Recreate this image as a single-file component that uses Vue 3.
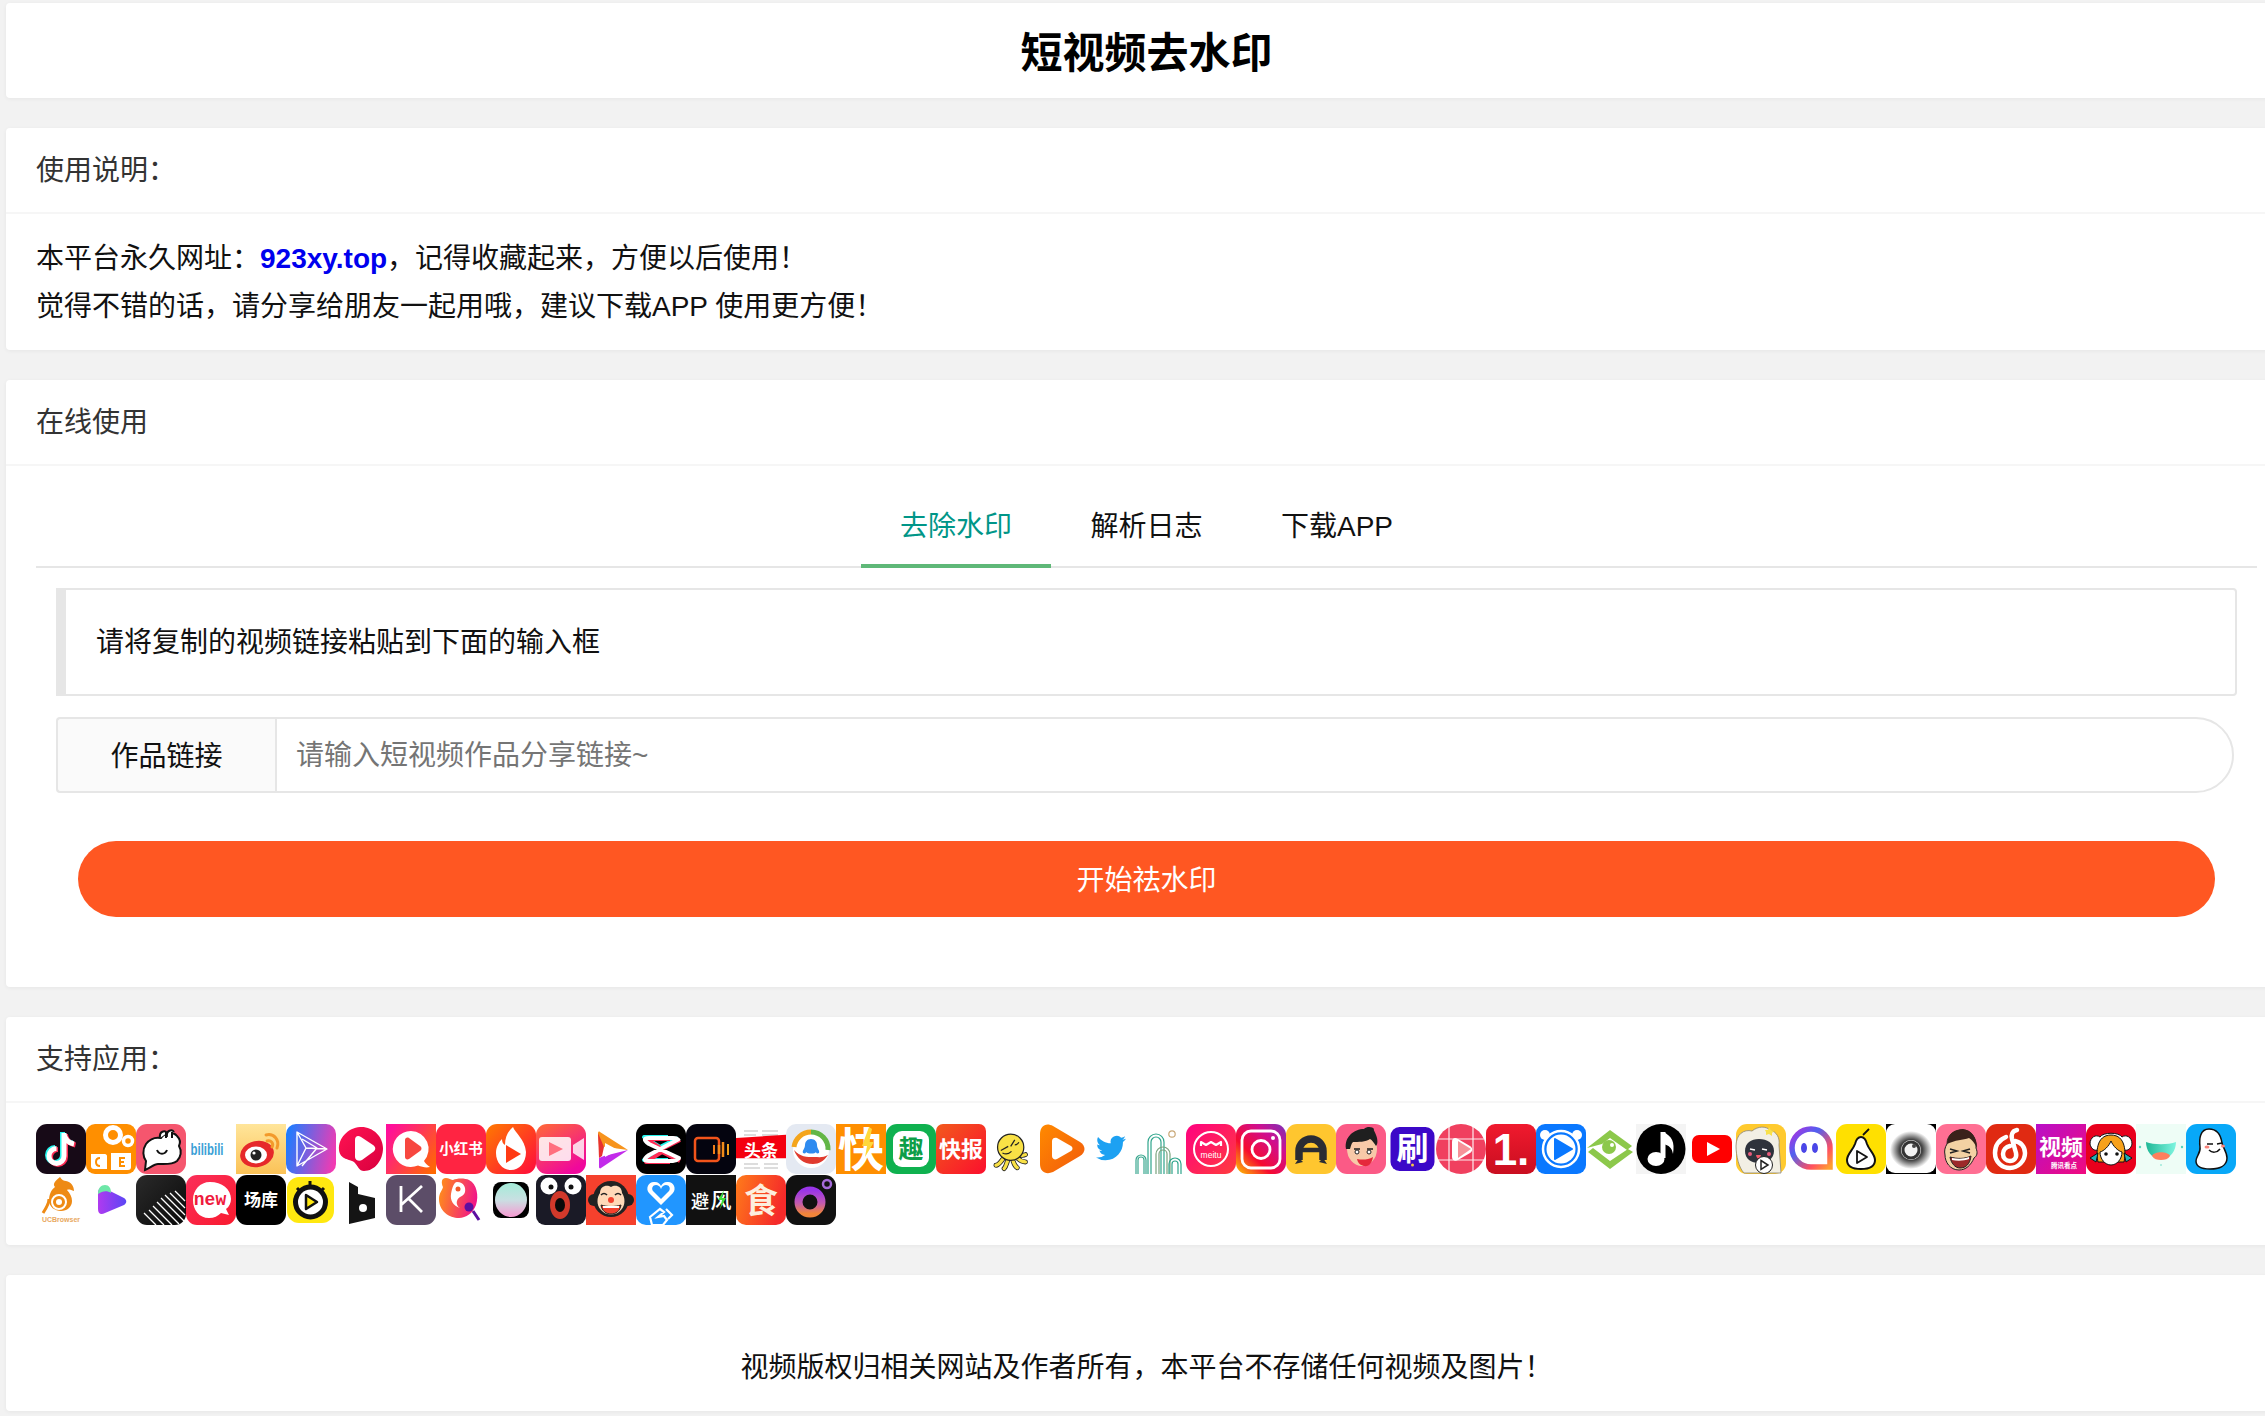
<script setup>
const tabs = [
  { label: '去除水印', active: true },
  { label: '解析日志', active: false },
  { label: '下载APP', active: false },
]

const bg = (fill, rx = 11) => `<rect width="50" height="50" rx="${rx}" fill="${fill}"/>`
const grad = (id, a, b, dir = 'x1="0" y1="0" x2="1" y2="1"') =>
  `<defs><linearGradient id="${id}" ${dir}><stop offset="0" stop-color="${a}"/><stop offset="1" stop-color="${b}"/></linearGradient></defs>`
const txt = (s, x, y, size, fill = '#fff', extra = 'font-weight="700"') =>
  `<text x="${x}" y="${y}" font-size="${size}" fill="${fill}" text-anchor="middle" ${extra}>${s}</text>`

const note = 'M28 9v23a7.5 7.5 0 1 1-7.5-7.5M28 10c1 6 5 9 10 10'
const tentacles = 'M14 36c-3 4-5 7-8 7M20 38c-1 3-2 7-4 9M27 38c1 3 2 6 5 8M32 34c3 3 6 5 10 5M34 30c3 1 6 1 8 0'

const icons = [
  // 1 TikTok
  bg('#170a17') +
    `<g fill="none" stroke-width="5"><path d="${note}" stroke="#25f4ee" transform="translate(-1.5 -1)"/><path d="${note}" stroke="#fe2c55" transform="translate(1.5 1)"/><path d="${note}" stroke="#fff"/></g>`,
  // 2 Kuaishou
  bg('#ff8f00', 9) +
    `<circle cx="27" cy="11" r="7.5" fill="none" stroke="#fff" stroke-width="5"/><circle cx="42" cy="17" r="4.5" fill="none" stroke="#fff" stroke-width="3.5"/><path d="M5 30h14c1 0 2 1 2 2v13H8c-2 0-3-1-3-3z" fill="#fff"/><path d="M25 29h20v14c0 2-1 3-3 3H25z" fill="#fff"/><path d="M14 34c-3 0-4 2-4 4s1 4 4 4M39 34h-5v8h5M34 38h4" fill="none" stroke="#ff8f00" stroke-width="2"/>`,
  // 3 Pink bubble
  bg('#f5566e') +
    `<path d="M9 46l1-9c-3-4-4-11 0-17 4-5 10-7 15-6 3-5 12-7 16-2 4 4 3 8 2 10 3 5 2 11-2 15-5 4-12 3-19 3-4 0-8 4-13 6z" fill="#fff" stroke="#111" stroke-width="2"/><path d="M24 14c-1-7 5-8 7-5M31 13c-1-7 5-8 7-5" fill="#fff" stroke="#111" stroke-width="2"/><path d="M30 8v6M36 8v6" stroke="#111" stroke-width="2"/><path d="M21 26c2 5 8 5 10 0" fill="none" stroke="#111" stroke-width="2"/>`,
  // 4 bilibili
  txt('bilibili', 21, 31, 16, '#3a9fd6', 'font-weight="700" textLength="33" lengthAdjust="spacingAndGlyphs"'),
  // 5 Weibo
  grad('g5', '#ffe59a', '#fbc257', 'x1="0" y1="0" x2="0" y2="1"') +
    `<rect width="50" height="50" fill="url(#g5)"/><ellipse cx="21" cy="30" rx="17" ry="13" fill="#e6282a" transform="rotate(-12 21 30)"/><ellipse cx="20" cy="31" rx="11" ry="8.5" fill="#fff"/><circle cx="20" cy="31" r="5.5" fill="#222"/><circle cx="18" cy="29" r="1.6" fill="#fff"/><path d="M30 11c8-2 14 5 11 13M31 17c4-1 7 2 5 6" fill="none" stroke="#f39a2b" stroke-width="3" stroke-linecap="round"/>`,
  // 6 Wireframe play
  grad('g6', '#1f7cff', '#f23ab2', 'x1="0" y1="0.4" x2="1" y2="0.6"') +
    bg('url(#g6)', 10) +
    `<path d="M11 8l30 17-30 17zM11 8l9 16-9 18M20 24l21 1M16 15l15 9-15 18" fill="none" stroke="#fff" stroke-width="1.4" stroke-linejoin="round"/>`,
  // 7 Red blob
  grad('g7', '#ff1252', '#d9003e') +
    `<path d="M24 3c12-1 23 9 23 21 0 12-8 23-19 23-5 0-6-5-10-9-4-3-14-2-15-12C2 14 12 4 24 3z" fill="url(#g7)"/><path d="M18 16c0-4 3-5 6-3l12 8c3 2 3 5 0 7l-11 8c-3 2-7 0-7-3z" fill="#fff" transform="translate(1 0)"/>`,
  // 8 Q play
  grad('g8', '#ff0f9b', '#ff6a00', 'x1="0" y1="0.2" x2="1" y2="0.9"') +
    `<rect width="50" height="50" fill="url(#g8)"/><path d="M25 7a18 18 0 1 0 7 34.500c4 1.500 8 2.500 12 1.500-3-2-5-4-6-6A18 18 0 0 0 25 7z" fill="#fff"/><path d="M19 16c0-2 2-3 4-2l11 8c2 1 2 4 0 5l-11 8c-2 1-4 0-4-2z" fill="#f7473f"/>`,
  // 9 Xiaohongshu
  bg('#ff2442') + txt('小红书', 25, 30, 14.5),
  // 10 Flame
  grad('g10', '#ff7a00', '#ff0a3c') +
    bg('url(#g10)') +
    `<path d="M27 3c2 6 12 12 13 25 0 11-7 18-15 18S10 39 10 29c0-6 3-11 6-14 0 3 1 5 3 6 0-8 3-14 8-18z" fill="#fff"/><path d="M20 21l15 9-15 9z" fill="#ff3a14"/>`,
  // 11 Camera gradient
  grad('g11', '#ff6b35', '#f0089c', 'x1="0" y1="0" x2="0.6" y2="1"') +
    bg('url(#g11)') +
    `<path d="M6 13h26c2 0 3 1 3 3v18c0 2-1 3-3 3H6c-2 0-3-1-3-3V16c0-2 1-3 3-3z" fill="#fff" opacity=".85"/><path d="M13 18l14 7-14 7z" fill="#ff6f7f"/><path d="M37 21l11-7v22l-11-7z" fill="#fff" opacity=".8"/>`,
  // 12 Play colour triangle
  `<path d="M14 8c-1-1-2 0-2 1l1 13 7 1 22 3z" fill="#f7941d"/><path d="M12 9l6 14-2 9-3 2z" fill="#e8322e"/><path d="M13 43c0 1 1 2 2 1l27-18-24 6-5 2z" fill="#c22bea"/><path d="M19 19l13 7-13 7z" fill="#fff"/>`,
  // 13 CapCut
  bg('#000') +
    `<g fill="none" stroke-width="4" stroke-linejoin="round"><path d="M43 15L25 24 9 14H33M43 36L25 27 9 37h24" stroke="#25f4ee" transform="translate(-1 -1)"/><path d="M43 15L25 24 9 14H33M43 36L25 27 9 37h24" stroke="#fe2c55" transform="translate(1 1)"/><path d="M43 15L13 31c-6 4-5 6 0 6h24c3 0 5-2 6-3L13 20c-6-4-5-6 0-6h24c3 0 5 1 6 3" stroke="#fff"/></g>`,
  // 14 Black video
  bg('#04040f') +
    `<rect x="9" y="14" width="24" height="23" rx="3" fill="none" stroke="#f2541b" stroke-width="2.500"/><path d="M28 21v9" stroke="#f07d1a" stroke-width="2"/><path d="M33 21v9M37 18v15" stroke="#f28b1a" stroke-width="2.500"/><path d="M42 20v11" stroke="#f2a01a" stroke-width="2"/>`,
  // 15 Toutiao
  `<rect width="50" height="50" fill="#fff"/><path d="M8 7h14M26 7h16M8 11h12M26 11h16M8 44h16M28 44h14M8 40h14M28 40h14" stroke="#ddd" stroke-width="2"/><path d="M0 14l50-4v30l-50 0z" fill="#f4000f" transform="translate(0 3) scale(1 .78)"/>` +
    txt('头条', 25, 33, 17),
  // 16 Tencent news
  bg('#e4e9f2', 10) +
    `<circle cx="25" cy="26" r="18" fill="#fff"/><path d="M8 23A17 17 0 0 1 25 8" fill="none" stroke="#f4a51c" stroke-width="5"/><path d="M25 8A17 17 0 0 1 42 26" fill="none" stroke="#63b646" stroke-width="5"/><path d="M8 26c3 8 9 14 19 14 6 0 11-3 15-9-5 3-9 2-14 2-7 0-14 0-20-7z" fill="#e03b2f"/><path d="M25 15c4 0 6 3 6 6 0 4 3 5 2 8-2 1-3 0-3-1-1 2-8 2-10 0 0 1-1 2-3 1-1-3 2-4 2-8 0-3 2-6 6-6z" fill="#2e8bf0"/>`,
  // 17 Kuai
  `<rect width="50" height="50" fill="#ff8f00"/>` + txt('快', 25, 42, 46) + `<path d="M33 3L26 22h5l-2 11 9-15h-5l3-13z" fill="#ffd83b"/>`,
  // 18 Qu
  bg('#0fb14f') + `<rect x="7" y="7" width="36" height="36" rx="9" fill="#fff"/>` + txt('趣', 25, 34, 25, '#0d9e48'),
  // 19 Kuaibao
  grad('g19', '#f25a1c', '#fb0f2d') + bg('url(#g19)', 7) + txt('快报', 25, 33, 22),
  // 20 Yellow octopus
  `<g transform="translate(5 6) scale(.82)"><path d="${tentacles}" stroke="#222" stroke-width="6" stroke-linecap="round" fill="none"/><path d="${tentacles}" stroke="#f9e146" stroke-width="4" stroke-linecap="round" fill="none"/><circle cx="24" cy="21" r="16" fill="#f9e146" stroke="#222" stroke-width="1.500"/><path d="M12 25l9-5M29 12l-5 8M14 28c4 2 8 1 11-2M29 18c2 0 4-1 5-3" stroke="#222" stroke-width="1.500" fill="none"/></g>`,
  // 21 Orange play
  grad('g21', '#ff8a00', '#f25a0c') +
    `<path d="M4 10c0-8 6-12 13-8l27 16c6 4 6 10 0 14L17 48C10 51 4 48 4 40z" fill="url(#g21)"/><path d="M16 17c0-3 3-4 5-3l14 8c2 1 2 4 0 5l-14 8c-2 1-5 0-5-3z" fill="#fff"/>`,
  // 22 Twitter
  `<g transform="translate(10 9) scale(1.25)"><path fill="#1da1f2" d="M23.950 4.570a10 10 0 0 1-2.820.780 4.960 4.960 0 0 0 2.160-2.720 9.900 9.900 0 0 1-3.120 1.180 4.920 4.920 0 0 0-8.380 4.480C7.690 8.100 4.070 6.130 1.640 3.160a4.820 4.820 0 0 0-.660 2.470c0 1.710.870 3.210 2.190 4.100a4.900 4.900 0 0 1-2.230-.610v.060a4.920 4.920 0 0 0 3.950 4.830 5 5 0 0 1-2.210.080 4.940 4.940 0 0 0 4.600 3.420A9.870 9.870 0 0 1 0 19.540a14 14 0 0 0 7.560 2.210c9.050 0 14-7.500 14-13.980 0-.210 0-.420-.020-.630A9.940 9.940 0 0 0 24 4.590z"/></g>`,
  // 23 Arches
  `<g fill="none" stroke-width="1.200"><path d="M0 50V36a5 5 0 0 1 10 0v14M2 50V36a3 3 0 0 1 6 0v14" stroke="#3aa78f"/><path d="M12 50V18a8 8 0 0 1 16 0v32M15 50V18a5 5 0 0 1 10 0v32" stroke="#2fa58c"/><path d="M20 50V30a7 7 0 0 1 14 0v20M23 50V30a4 4 0 0 1 8 0v20" stroke="#7aa37e"/><path d="M33 50V40a6 6 0 0 1 12 0v10M36 50V40a3 3 0 0 1 6 0v10" stroke="#2fa58c"/></g><circle cx="36" cy="10" r="3.200" fill="#fff" stroke="#c9a877" stroke-width="1.200"/>`,
  // 24 Meitu
  grad('g24', '#ff0080', '#ff3d3d') +
    bg('url(#g24)') +
    `<circle cx="25" cy="25" r="17" fill="none" stroke="#fff" stroke-width="2"/><path d="M15 22v-4l5 3 5-3 5 3 5-3v4" fill="none" stroke="#fff" stroke-width="2.200" stroke-linejoin="round"/>` +
    txt('meitu', 25, 34, 8.500, '#fff', 'font-weight="400"'),
  // 25 Instagram
  `<defs><linearGradient id="g25" x1="0" y1="1" x2="1" y2="0"><stop offset="0" stop-color="#fec800"/><stop offset=".35" stop-color="#f60b30"/><stop offset=".7" stop-color="#d00f8e"/><stop offset="1" stop-color="#7a32b8"/></linearGradient></defs>` +
    bg('url(#g25)') +
    `<rect x="6" y="7" width="38" height="37" rx="9" fill="none" stroke="#fff" stroke-width="2.800"/><circle cx="25" cy="25.500" r="9" fill="none" stroke="#fff" stroke-width="2.800"/><circle cx="37" cy="14" r="2" fill="#fff"/>`,
  // 26 Yellow A
  bg('#ffc62f') +
    `<path d="M13 36V27a12 12 0 0 1 24 0v9" fill="none" stroke="#2a2c33" stroke-width="7.500"/><path d="M9 40l4-6 4 4zM41 40l-4-6-4 4z" fill="#2a2c33"/><path d="M14 26h22" stroke="#2a2c33" stroke-width="4.500"/>`,
  // 27 Boy
  bg('#fb5a86') +
    `<ellipse cx="26" cy="25" rx="15" ry="17" fill="#f7c9a8"/><path d="M10 25c-2-12 8-20 18-20 3-3 9-2 10 0-1 1 2 4 3 9 1 5 0 7-1 8-2-3-4-6-6-7-4 3-12 3-17 3-2 2-2 4-3 7z" fill="#1f1f1f"/><path d="M18 25h6M31 25h6" stroke="#1f1f1f" stroke-width="1.500"/><circle cx="21" cy="28" r="2" fill="#fff" stroke="#222"/><circle cx="33" cy="28" r="2" fill="#fff" stroke="#222"/><path d="M21 35c5 1 11 1 16-2-1 6-4 10-9 9-4-1-6-3-7-7z" fill="#e5283c"/>`,
  // 28 Shua
  `<rect x="4.500" y="3" width="44" height="44" rx="9" fill="#3c08c8"/>` + txt('刷', 26.500, 36, 32) + `<circle cx="26.500" cy="41" r="1.500" fill="#f6c544"/>`,
  // 29 Red grid
  `<circle cx="25" cy="25" r="25" fill="#f0405f"/><path d="M2 15h46M2 36h46M13 2v46M37 2v46" stroke="#fff" stroke-width="1.200" opacity=".9"/><path d="M16 18c0-4 3-5 6-3l12 7c3 2 3 5 0 7l-12 7c-3 2-6 0-6-3z" fill="#fff"/><path d="M22 17l13 8-13 9z" fill="#f04a55" opacity=".6"/>`,
  // 30 One
  grad('g30', '#f01a2e', '#c90e20', 'x1="0" y1="0" x2="0" y2="1"') + bg('url(#g30)', 9) + txt('1.', 25, 41, 44, '#fff', 'font-weight="700" font-family="Liberation Sans"'),
  // 31 Baidu bear
  bg('#0a78ff', 9) +
    `<circle cx="9" cy="11" r="5" fill="#fff"/><circle cx="41" cy="11" r="5" fill="#fff"/><circle cx="25" cy="25" r="18" fill="#0a78ff" stroke="#fff" stroke-width="2.500"/><circle cx="25" cy="25" r="14.500" fill="#fff"/><path d="M19 15l17 10-17 10z" fill="#0a78ff" stroke="#0a78ff" stroke-width="2" stroke-linejoin="round"/>`,
  // 32 Green eye
  `<path d="M1 24L24 6l22 16-5 4-17-12-8 6zM2 28l5-4 17 13 18-12 5 3-23 17z" fill="#8cc84b"/><circle cx="23" cy="23" r="7" fill="#8cc84b"/><circle cx="26" cy="21" r="2" fill="#fff"/>`,
  // 33 Music
  `<rect width="50" height="50" fill="#f4f4f4"/><ellipse cx="25" cy="25" rx="24.500" ry="25" fill="#000"/><path d="M27 8v26" stroke="#fff" stroke-width="5"/><ellipse cx="20" cy="35" rx="8.500" ry="7" fill="#fff"/><path d="M27 8c9 4 12 10 10 22-1-6-4-9-10-10z" fill="#fff"/>`,
  // 34 YouTube
  `<rect x="6" y="11" width="40" height="28" rx="7" fill="#f00"/><path d="M21 18l13 7-13 7z" fill="#fff"/>`,
  // 35 Sheep
  bg('#ffca2e') +
    `<path d="M0 22C0 10 8 5 16 7c6-5 14-5 18-1 7 2 10 8 9 15l2 28H8C3 44 0 32 0 22z" fill="#f2efe4" stroke="#8c8470" stroke-width=".8"/><path d="M9 27c0-8 6-12 14-12s15 4 15 12c0 8-7 12-15 12S9 35 9 27z" fill="#2e323b"/><path d="M14 25l5 1M26 25l5 1" stroke="#fff" stroke-width="1.500"/><path d="M20 31c1 5 4 5 5 0z" fill="#f15a6b"/><circle cx="14" cy="30" r="2" fill="#e85b7b"/><circle cx="33" cy="30" r="2" fill="#e85b7b"/><circle cx="28" cy="41" r="8.500" fill="#fff" stroke="#222" stroke-width="1"/><path d="M25 36.500l7 4.500-7 4.500z" fill="none" stroke="#222" stroke-width="1.500"/><path d="M29 6l3 0 1-3 2 3 3 1-2 2 0 3-3-2-3 1 0-3z" fill="#f8e04a"/>`,
  // 36 Gradient ring
  `<defs><linearGradient id="g36" x1="0" y1="0" x2="1" y2="1"><stop offset="0" stop-color="#b030e0"/><stop offset=".35" stop-color="#5060f0"/><stop offset=".75" stop-color="#ff5060"/><stop offset="1" stop-color="#ffa030"/></linearGradient></defs><path d="M44 43H25A19 19 0 1 1 44 24z" fill="none" stroke="url(#g36)" stroke-width="5.500"/><ellipse cx="18" cy="24" rx="3" ry="5" fill="#4a46e8"/><ellipse cx="29" cy="24" rx="3" ry="5" fill="#4a46e8"/>`,
  // 37 Pear
  bg('#ffe000') +
    `<path d="M25 13c3 0 5 3 6 7 2 6 8 10 8 16 0 5-4 9-14 9s-14-4-14-9c0-6 6-10 8-16 1-4 3-7 6-7z" fill="#fff" stroke="#111" stroke-width="2"/><path d="M27 11l6-6" stroke="#111" stroke-width="1.800"/><path d="M21 27l10 6-10 6z" fill="none" stroke="#111" stroke-width="1.800" stroke-linejoin="round"/>`,
  // 38 Eye
  `<defs><radialGradient id="g38"><stop offset=".55" stop-color="#444"/><stop offset="1" stop-color="#fff"/></radialGradient></defs><rect width="50" height="50" fill="#000"/><rect x="0" y="0" width="50" height="49" rx="9" fill="#fff"/><ellipse cx="25" cy="26" rx="21" ry="19" fill="url(#g38)"/><circle cx="25" cy="26" r="10" fill="#f2f2f2"/><circle cx="25" cy="26" r="8" fill="none" stroke="#333" stroke-width="3"/><circle cx="28" cy="22" r="2" fill="#444"/>`,
  // 39 Laugh face
  bg('#ff6f93') +
    `<path d="M11 20c0-10 8-14 16-14s14 8 13 18c2 5 1 8-2 10-3 7-8 12-15 12-9 0-14-8-14-15-1-4 0-8 2-11z" fill="#f3d1a3" stroke="#222"/><path d="M11 20c0-10 8-15 16-15 8 1 14 8 14 19-3-6-5-8-8-10-6 2-14 2-22 6z" fill="#3a211a"/><path d="M14 25l7 2-7 2M34 25l-7 2 7 2" fill="none" stroke="#222" stroke-width="1.500"/><path d="M14 33c7 2 15 2 21-1-1 8-5 12-11 12-5 0-9-5-10-11z" fill="#9c2a2a" stroke="#222"/><path d="M16 34c6 1 12 1 17-1v2c-5 2-12 2-17 1z" fill="#fff"/>`,
  // 40 NetEase
  bg('#e02a12') +
    `<path d="M31 6c-5 1-6 5-5 9l4 14c1 5-2 8-6 8-4 0-7-3-7-7 0-4 3-7 7-8M20 13c-7 3-11 9-11 16 0 9 7 15 15 15s15-7 15-15c0-6-4-11-10-12" fill="none" stroke="#fff" stroke-width="4.500" stroke-linecap="round"/>`,
  // 41 Video magenta
  grad('g41', '#b80fc8', '#f00a7e') +
    `<rect width="50" height="50" fill="url(#g41)"/>` +
    txt('视频', 25, 31, 22) +
    txt('腾讯看点', 28, 44, 6.500),
  // 42 Anime girl
  bg('#e8001c') +
    `<path d="M4 20c0-7 6-10 10-7 3-5 19-5 22 0 4-3 10 0 10 7-1 5-5 7-7 6H11c-2 1-6-1-7-6z" fill="#fff" stroke="#111"/><path d="M12 38c-2-9-2-27 13-27s15 18 13 27z" fill="#f7a11a" stroke="#111"/><path d="M14 28c4-1 9-6 11-11 2 5 7 10 11 11 0 7-5 13-11 13S14 35 14 28z" fill="#fff" stroke="#111"/><circle cx="20" cy="30" r="1.800" fill="#111"/><circle cx="31" cy="30" r="1.800" fill="#111"/><path d="M4 34l8-5-2 9zM46 34l-8-5 2 9z" fill="#1fb3b8" stroke="#111"/>`,
  // 43 Mint bowl
  grad('g43', '#1fb896', '#7ff5e0', 'x1="0" y1="0" x2="1" y2="0"') +
    `<rect width="50" height="50" fill="#eefdf6"/><path d="M10 18c8 3 22 3 30 0 0 8-5 17-15 17S10 26 10 18z" fill="url(#g43)"/><path d="M16 32c2-5 16-5 18 0-2 3-5 4-9 4s-7-1-9-4z" fill="#ff7f5c"/><circle cx="4" cy="23" r="1.200" fill="#58d6bd"/><circle cx="46" cy="23" r="1.200" fill="#58d6bd"/><circle cx="25" cy="41" r="1" fill="#9ce9d8"/>`,
  // 44 Blue ghost
  bg('#08a8f8') +
    `<path d="M23 5c9 0 12 7 13 14 1 5 5 9 5 15 0 8-8 11-17 11-7 0-14-2-14-8 0-5 5-8 4-14C13 15 14 5 23 5z" fill="#fff" stroke="#111" stroke-width="1.500"/><path d="M21 20l6 0M31 20l5-1M23 26c3 3 8 3 11-1" fill="none" stroke="#111" stroke-width="1.500"/><ellipse cx="21" cy="23" rx="2.500" ry="1.500" fill="#f9837a"/><ellipse cx="37" cy="22" rx="2" ry="1.500" fill="#f9837a"/>`,
  // 45 UC
  `<path d="M24 2c2 3 4 4 6 4 5 1 8 5 8 10-3-1-5-2-7-1 3 3 5 7 5 11 0 6-5 10-11 10s-12-4-12-11c0-5 2-10 6-13C16 9 20 5 24 2z" fill="#ee8a14"/><circle cx="23" cy="27" r="7" fill="none" stroke="#fff" stroke-width="2"/><circle cx="23" cy="27" r="3" fill="#fff"/><path d="M7 38c4-6 6-10 6-14" stroke="#ee8a14" stroke-width="3" fill="none"/>` +
    txt('UCBrowser', 25, 47, 7.500, '#e8a860', 'font-weight="700" textLength="38" lengthAdjust="spacingAndGlyphs"'),
  // 46 Purple play
  grad('g46', '#b03af0', '#5b46f5', 'x1="0" y1="0" x2="1" y2="0"') +
    `<path d="M12 19c0-6 3-8 8-5l18 9c3 2 3 5 0 7L19 38c-4 2-7 1-7-4z" fill="url(#g46)"/><path d="M12 19c0-6 3-9 7-9 4 0 6 3 6 8-4-3-9-2-13 1z" fill="#6ee7a8"/>`,
  // 47 Black lines
  grad('g47', '#2a2a2a', '#0a0a0a') +
    bg('url(#g47)') +
    `<path d="M8 38l12 12M13 35l15 15M17 31l19 19M21 27l22 22M25 23l23 23M29 20l20 20M34 18l15 15M39 16l10 10" stroke="#fff" stroke-width="1.300"/>`,
  // 48 new
  grad('g48', '#fb2f5a', '#f91a2e') +
    bg('url(#g48)') +
    `<path d="M24 7c12 0 21 7 21 17 0 4-2 8-5 10l3 6-8-2c-3 3-7 5-12 5-10 0-16-8-16-18S14 7 24 7z" fill="#fff"/>` +
    txt('new', 24, 30, 18, '#ef1b3e', 'font-weight="700" font-family="Liberation Mono"'),
  // 49 Changku
  bg('#000') + txt('场库', 25, 31, 17),
  // 50 Stopwatch
  `<rect x="1" y="2" width="47" height="46" rx="12" fill="#ffe810"/><path d="M24 6v5M11 13l3 3M38 13l-3 3" stroke="#111" stroke-width="3"/><circle cx="24.500" cy="27" r="15" fill="#fff" stroke="#111" stroke-width="5"/><path d="M20 20l11 7-11 7z" fill="#ffe810" stroke="#111" stroke-width="2.500" stroke-linejoin="round"/>`,
  // 51 Folder
  `<path d="M13 9l9 5v7l17 4v20l-26 6z" fill="#141414" transform="translate(0 -2)"/><circle cx="27" cy="33" r="4" fill="#fff"/>`,
  // 52 Keep
  bg('#5c4d68') + `<path d="M15 11v26M15 30l21-19M22 23l14 14" fill="none" stroke="#fff" stroke-width="2.800"/>`,
  // 53 Yin-yang
  grad('g53', '#ff8a1c', '#f1108c', 'x1="0" y1="0.4" x2="1" y2="0.6"') +
    `<path d="M7 4c3-3 8 1 10 1 4-2 12-2 16 0 8 4 10 16 7 25-3 8-10 13-17 13C13 43 3 36 3 24c0-6 3-8 4-12-1-2-2-6 0-8z" fill="url(#g53)"/><path d="M21 7c7 0 9 6 8 10-1 5-7 4-8 9-1 3 1 6 3 7-7-2-10-8-9-14 1-6 3-12 6-12z" fill="#fff"/><circle cx="22" cy="14" r="2.500" fill="#f2582a"/><circle cx="33" cy="32" r="4.500" fill="#5c0fa0"/><path d="M37 36l6 9" stroke="#5c0fa0" stroke-width="3"/>`,
  // 54 Pastel
  `<defs><linearGradient id="g54" x1="0" y1="0" x2="0" y2="1"><stop offset="0" stop-color="#a3ecd8"/><stop offset=".5" stop-color="#c9dfe2"/><stop offset="1" stop-color="#f79ad2"/></linearGradient></defs><rect x="7" y="7" width="36" height="36" rx="8" fill="#000"/><ellipse cx="25" cy="25" rx="16" ry="17" fill="url(#g54)"/>`,
  // 55 Eyes
  bg('#1a1a26', 9) +
    `<circle cx="13" cy="11" r="8.500" fill="#fff"/><circle cx="37" cy="11" r="8.500" fill="#fff"/><circle cx="15" cy="12" r="2.500" fill="#111"/><circle cx="35" cy="12" r="2.500" fill="#111"/><ellipse cx="24" cy="30" rx="10" ry="14" fill="#d2392b"/><ellipse cx="24" cy="30" rx="5" ry="7" fill="#0a0a0a"/>`,
  // 56 Monkey
  `<rect width="50" height="50" fill="#f5412d"/><circle cx="8" cy="25" r="6" fill="#222"/><circle cx="42" cy="25" r="6" fill="#222"/><circle cx="25" cy="24" r="18" fill="#222"/><path d="M25 12c4-3 11-1 11 6 3 4 4 12-1 17-5 6-15 6-20 0-5-5-4-13-1-17 0-7 7-9 11-6z" fill="#ffd9b8"/><path d="M15 20c2-2 4-2 6 0M29 20c2-2 4-2 6 0" fill="none" stroke="#222" stroke-width="1.600"/><circle cx="25" cy="25" r="3" fill="#f5412d"/><path d="M15 30c6 2 14 2 20 0-1 6-5 9-10 9s-9-3-10-9z" fill="#f5412d" stroke="#222"/><path d="M17 31h16v2H17z" fill="#fff"/>`,
  // 57 Heart
  bg('#2196ff', 10) +
    `<path d="M25 30L13 18c-4-5 0-12 6-11 3 0 5 2 6 4 1-2 3-4 6-4 6-1 10 6 6 11z" fill="#fff"/><path d="M25 24l-8-8c-2-3 0-6 3-6 2 0 4 1 5 4 1-3 3-4 5-4 3 0 5 3 3 6z" fill="#2196ff"/><path d="M14 42l10-8 4 3-6 5 6-1 3 4-4 5H16zM30 34l6 6-4 4" fill="#2196ff" stroke="#fff" stroke-width="2.200"/>`,
  // 58 Bifeng
  `<rect width="50" height="50" fill="#111"/>` +
    txt('避', 14, 33, 18, '#fff', 'font-weight="500"') +
    txt('风', 35, 33, 21, '#fff', 'font-weight="500"') +
    `<path d="M38 15l-6 10h4l-2 9 6-11h-4z" fill="#3fe03a"/>`,
  // 59 Shi
  grad('g59', '#ff7c1a', '#f52a2a', 'x1="0" y1="0" x2="1" y2="0.300"') +
    bg('url(#g59)', 10) +
    txt('食', 25, 38, 34, '#fdeede', 'font-weight="700" font-family="Noto Sans CJK TC"'),
  // 60 Ring
  `<defs><linearGradient id="g60" x1="0" y1="0" x2="0" y2="1"><stop offset="0" stop-color="#9a35e8"/><stop offset=".55" stop-color="#c25ab0"/><stop offset="1" stop-color="#f0843a"/></linearGradient></defs>` +
    bg('#111') +
    `<circle cx="24" cy="27" r="11.500" fill="none" stroke="url(#g60)" stroke-width="8"/><circle cx="41" cy="9" r="4" fill="none" stroke="#a46ad9" stroke-width="2.500"/>`,
]
</script>

<template>
  <div class="viewport">
    <div class="page">
      <header class="card title-card">
        <h1 class="title">短视频去水印</h1>
      </header>

      <section class="card">
        <div class="card-header">使用说明：</div>
        <div class="card-body notice">
          <p>本平台永久网址：<a class="site-link">923xy.top</a>，记得收藏起来，方便以后使用！</p>
          <p>觉得不错的话，请分享给朋友一起用哦，建议下载APP 使用更方便！</p>
        </div>
      </section>

      <section class="card">
        <div class="card-header">在线使用</div>
        <div class="tool-body">
          <ul class="tabs">
            <li v-for="tab in tabs" :key="tab.label" class="tab" :class="{ active: tab.active }">{{ tab.label }}</li>
          </ul>
          <div class="form-area">
            <blockquote class="hint">请将复制的视频链接粘贴到下面的输入框</blockquote>
            <div class="input-row">
              <label class="input-label">作品链接</label>
              <input class="link-input" type="text" placeholder="请输入短视频作品分享链接~" />
            </div>
            <button class="submit" type="button">开始祛水印</button>
          </div>
        </div>
      </section>

      <section class="card">
        <div class="card-header">支持应用：</div>
        <div class="icons">
          <svg v-for="(icon, i) in icons" :key="i" class="app-icon" viewBox="0 0 50 50" v-html="icon"></svg>
        </div>
      </section>

      <footer class="card footer-card">视频版权归相关网站及作者所有，本平台不存储任何视频及图片！</footer>
    </div>
  </div>
</template>

<style>
html,
body {
  margin: 0;
  background: #f2f2f2;
}
</style>

<style scoped>
.viewport {
  width: 100%;
  height: 1416px;
  overflow: hidden;
  background: #f2f2f2;
}
.page {
  width: 2281px;
  padding: 3px 0 0 6px;
  display: flex;
  flex-direction: column;
  gap: 30px;
  font-family: "Liberation Sans", "Noto Sans CJK SC", sans-serif;
  font-size: 28px;
  color: #111;
}
.card {
  background: #fff;
  border-radius: 4px;
  box-shadow: 0 1px 4px rgba(0, 0, 0, 0.05);
}
.title-card {
  height: 95px;
  display: flex;
  align-items: center;
  justify-content: center;
}
.title {
  margin: 6px 0 0;
  font-size: 42px;
  line-height: 1;
  font-weight: 700;
  color: #000;
}
.card-header {
  height: 79px;
  padding: 0 30px 5px;
  display: flex;
  align-items: center;
  color: #333;
  border-bottom: 2px solid #f6f6f6;
}
.notice {
  padding: 21px 30px 19px;
}
.notice p {
  margin: 0;
  line-height: 48px;
}
.site-link {
  color: #0000ee;
  font-weight: 700;
}
.tool-body {
  padding: 0 30px 70px;
}
.tabs {
  list-style: none;
  margin: 0;
  padding: 0;
  height: 100px;
  border-bottom: 2px solid #e6e6e6;
  display: flex;
  justify-content: center;
}
.tab {
  width: 190.500px;
  height: 100px;
  display: flex;
  align-items: center;
  justify-content: center;
  padding-top: 15px;
  box-sizing: border-box;
}
.tab.active {
  color: #009688;
  height: 102px;
  border-bottom: 4px solid #5fb878;
  padding-top: 17px;
}
.form-area {
  padding: 20px 20px 0;
}
.hint {
  margin: 0;
  height: 108px;
  box-sizing: border-box;
  padding-left: 30px;
  padding-top: 1px;
  display: flex;
  align-items: center;
  border: 2px solid #e6e6e6;
  border-left-width: 10px;
  border-radius: 0 4px 4px 0;
  line-height: 1;
}
.input-row {
  margin: 21px 3px 0 0;
  height: 76px;
  display: flex;
}
.input-label {
  width: 219px;
  box-sizing: border-box;
  padding-bottom: 2px;
  display: flex;
  align-items: center;
  justify-content: center;
  background: #fafafa;
  border: 2px solid #e6e6e6;
  border-right: 0;
  border-radius: 4px 0 0 4px;
}
.link-input {
  flex: 1;
  min-width: 0;
  box-sizing: border-box;
  padding: 2px 19px 0;
  font: inherit;
  color: #111;
  background: #fff;
  border: 2px solid #e6e6e6;
  border-radius: 0 38px 38px 0;
  outline: none;
}
.link-input::placeholder {
  color: #757575;
}
.submit {
  display: block;
  width: calc(100% - 44px);
  height: 76px;
  margin: 48px 22px 0;
  padding: 0 0 2px;
  border: 0;
  border-radius: 38px;
  background: #ff5722;
  color: #fff;
  font: inherit;
}
.icons {
  padding: 21px 30px 20px;
  display: flex;
  flex-wrap: wrap;
  gap: 1px 0;
}
.app-icon {
  width: 50px;
  height: 50px;
  flex: none;
  display: block;
  overflow: visible;
  font-family: "Liberation Sans", "Noto Sans CJK SC", sans-serif;
}
.footer-card {
  height: 136px;
  box-sizing: border-box;
  padding-top: 75px;
  text-align: center;
  line-height: 36px;
}
</style>
